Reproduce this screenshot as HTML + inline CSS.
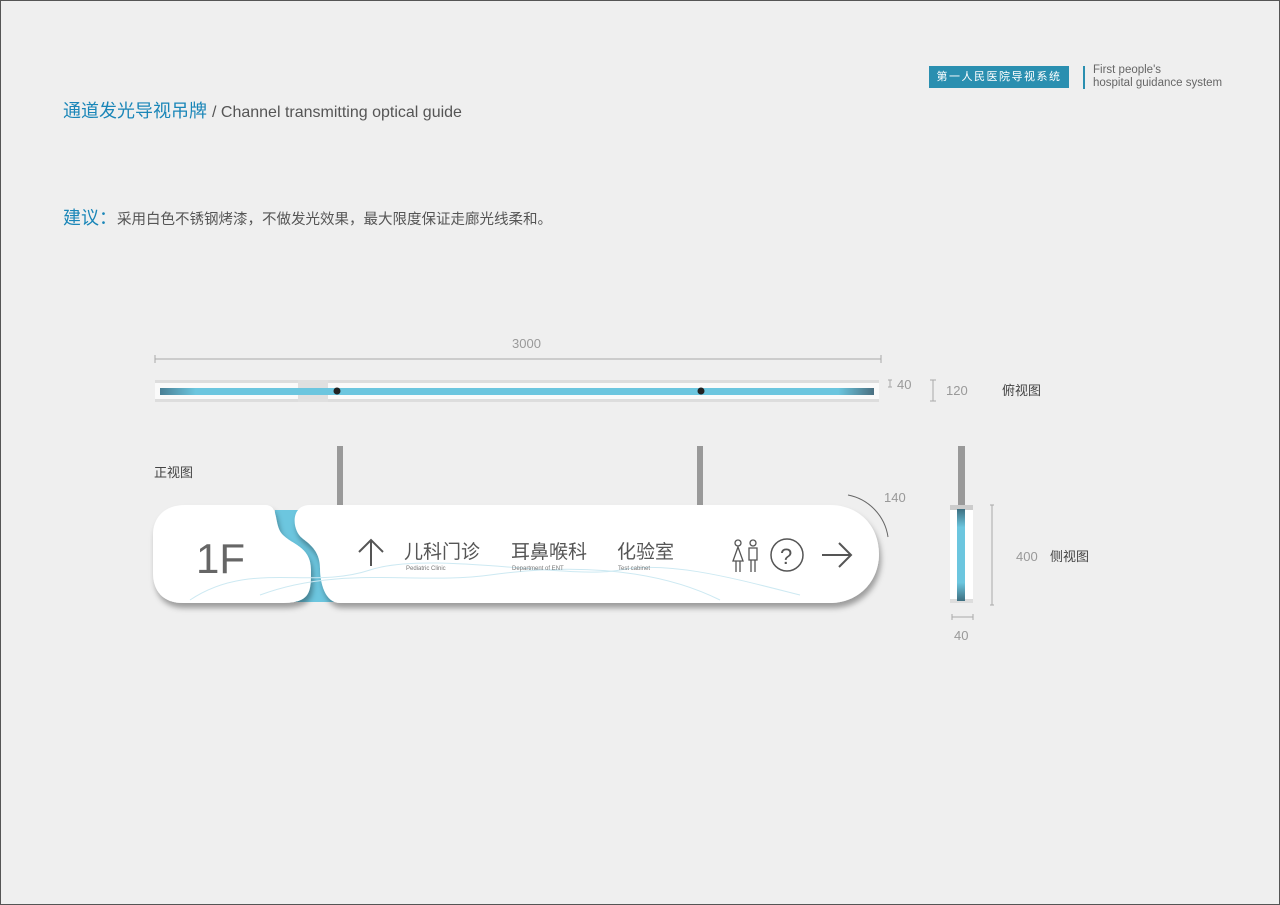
<!DOCTYPE html>
<html><head><meta charset="utf-8"><style>
body{margin:0;width:1280px;height:905px;background:#efefef;position:relative;overflow:hidden;font-family:"Liberation Sans","Noto Sans CJK SC",sans-serif;}
.a{position:absolute;white-space:nowrap}
</style></head><body>
<div class="a" style="left:0;top:0;width:1278px;height:903px;border:1px solid #555"></div>
<div class="a" style="left:63px;top:97px;font-size:18px;color:#1a86b8">通道发光导视吊牌 <span style="color:#555;font-size:16px">/ Channel transmitting optical guide</span></div>
<div class="a" style="left:929px;top:66px;width:140px;height:22px;background:#2a8fb0;color:#fff;font-size:11px;line-height:22px;text-align:center;letter-spacing:1.5px">第一人民医院导视系统</div>
<div class="a" style="left:1083px;top:66px;width:2px;height:23px;background:#2a8fb0"></div>
<div class="a" style="left:1093px;top:64px;font-size:11.5px;color:#666;line-height:13px">First people's<br>hospital guidance system</div>
<div class="a" style="left:63px;top:204px;font-size:18px;color:#1a86b8">建议：<span style="color:#555;font-size:14.5px">采用白色不锈钢烤漆，不做发光效果，最大限度保证走廊光线柔和。</span></div>
<svg class="a" style="left:0;top:0" width="1280" height="905">
<defs>
<linearGradient id="bl" x1="0" x2="1"><stop offset="0" stop-color="#4a7f95"/><stop offset=".05" stop-color="#6cc6df"/><stop offset=".95" stop-color="#6cc6df"/><stop offset="1" stop-color="#4a6f80"/></linearGradient>
<linearGradient id="vb" y1="0" y2="1" x1="0" x2="0"><stop offset="0" stop-color="#3e6f80"/><stop offset=".2" stop-color="#6cc6df"/><stop offset=".8" stop-color="#6cc6df"/><stop offset="1" stop-color="#3e6f80"/></linearGradient>
<filter id="sh" x="-5%" y="-20%" width="110%" height="150%"><feDropShadow dx="2" dy="5" stdDeviation="3" flood-color="#000" flood-opacity=".35"/></filter>
</defs>
<g stroke="#aaa" fill="none"><path d="M155 355v8M881 355v8M155 359H881"/><path d="M888 380h4M888 387h4M890 380v7"/><path d="M930 380h6M930 401h6M933 380v21"/><path d="M990 505h4M990 605h4M992 505v100"/><path d="M952 614v6M973 614v6M952 617h21"/></g>
<text x="512" y="348" font-size="13" fill="#999">3000</text>
<text x="897" y="389" font-size="13" fill="#999">40</text>
<text x="946" y="395" font-size="13" fill="#999">120</text>
<text x="1002" y="395" font-size="13" fill="#444">俯视图</text>
<text x="884" y="502" font-size="13" fill="#999">140</text>
<text x="1016" y="561" font-size="13" fill="#999">400</text>
<text x="1050" y="561" font-size="13" fill="#444">侧视图</text>
<text x="954" y="640" font-size="13" fill="#999">40</text>
<text x="154" y="477" font-size="13" fill="#444">正视图</text>
<rect x="155" y="380" width="724" height="22" fill="#fafafa"/>
<rect x="155" y="380" width="724" height="3" fill="#ddd"/><rect x="155" y="399" width="724" height="3" fill="#ddd"/>
<rect x="298" y="380" width="30" height="22" fill="#e0e0e0"/>
<rect x="160" y="388" width="714" height="7" fill="url(#bl)"/>
<circle cx="337" cy="391" r="3.5" fill="#222"/><circle cx="701" cy="391" r="3.5" fill="#222"/>
<rect x="337" y="446" width="6" height="60" fill="#999"/><rect x="697" y="446" width="6" height="60" fill="#999"/>
<rect x="958" y="446" width="7" height="62" fill="#999"/>
<rect x="950" y="505" width="23" height="98" fill="#fff"/>
<rect x="950" y="505" width="23" height="5" fill="#ccc"/><rect x="950" y="599" width="23" height="4" fill="#ddd"/>
<rect x="957" y="509" width="8" height="92" fill="url(#vb)"/>
<path d="M848 495a50 50 0 0 1 40 42" stroke="#666" fill="none"/>
<path d="M275 510h60v92h-60z" fill="#6cc6df"/>
<g filter="url(#sh)" fill="#fff">
<path d="M185 505h80c15 0 8 20 18 30c10 10 28 12 28 35c0 22 0 33-30 33h-98c-20 0-30-12-30-30v-38c0-18 12-30 32-30z"/>
<path d="M310 505h520c28 0 49 20 49 49c0 28-21 49-49 49h-490c-15 0-20-20-20-35c0-18-12-25-18-30c-10-8-12-33 8-33z"/>
</g>
<g stroke="#cde9f2" fill="none" stroke-width="1"><path d="M190 600c60-40 120-10 180-30s200 10 250 0 120 10 180 25"/><path d="M260 595c80-30 160-10 230-20s160-10 230 25"/></g>
<text x="196" y="573" font-size="42" fill="#666" font-family="Liberation Sans">1F</text>
<path d="M371 566v-26M359 552l12-12 12 12" stroke="#555" stroke-width="2" fill="none"/>
<text x="404" y="558" font-size="19" fill="#555">儿科门诊</text>
<text x="406" y="570" font-size="6" fill="#777">Pediatric Clinic</text>
<text x="511" y="558" font-size="19" fill="#555">耳鼻喉科</text>
<text x="512" y="570" font-size="6" fill="#777">Department of ENT</text>
<text x="617" y="558" font-size="19" fill="#555">化验室</text>
<text x="618" y="570" font-size="6" fill="#777">Test cabinet</text>
<g stroke="#555" fill="none" stroke-width="1.3"><circle cx="738" cy="543" r="3"/><path d="M738 547l-5 14h10zM736 561v11M740 561v11"/><circle cx="753" cy="543" r="3"/><path d="M749 548h8v12h-8zM751 560v12M755 560v12"/></g>
<circle cx="787" cy="555" r="16" stroke="#555" fill="none" stroke-width="1.5"/>
<text x="780" y="564" font-size="22" fill="#555">?</text>
<path d="M822 555h28M839 543l12 12-12 12" stroke="#555" stroke-width="2" fill="none"/>
</svg>
</body></html>
